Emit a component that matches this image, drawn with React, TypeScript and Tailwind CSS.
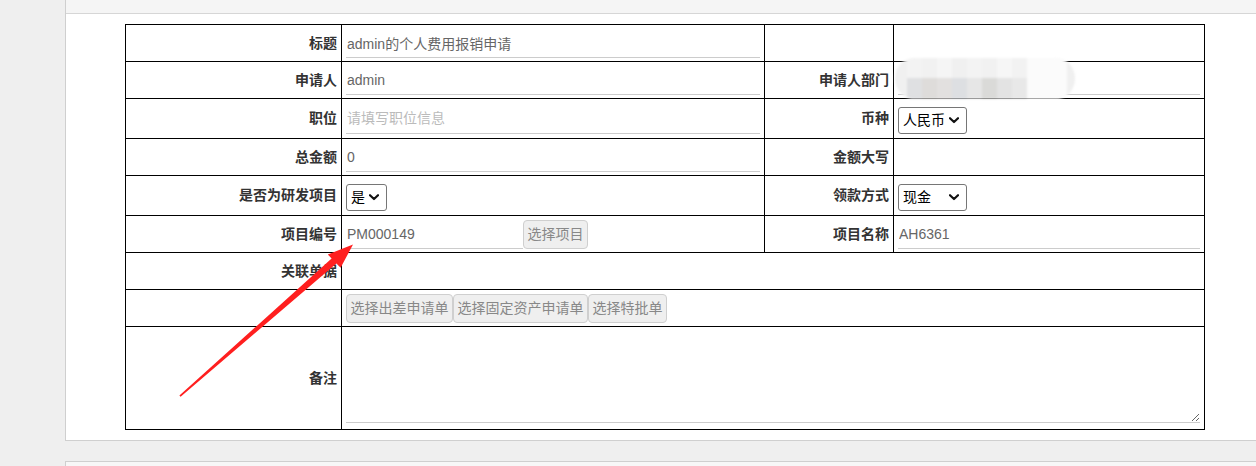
import React from "react";

const font = { fontFamily: '"Liberation Sans", "Noto Sans CJK SC", sans-serif' };

function Chevron() {
  return (
    <svg width="10" height="7" viewBox="0 0 10 7" className="shrink-0">
      <polyline points="1,1.2 5,5 9,1.2" fill="none" stroke="#111" strokeWidth="2.2" strokeLinecap="round" strokeLinejoin="round" />
    </svg>
  );
}

function Sel({ text, w }: { text: string; w: string }) {
  return (
    <div className={`inline-flex items-center justify-between h-[27px] border border-[#767676] rounded-[3px] pl-[4px] pr-[7px] text-[14px] text-black bg-white ${w}`}>
      <span>{text}</span>
      <Chevron />
    </div>
  );
}

function Inp({ value, placeholder, w = "w-full" }: { value?: string; placeholder?: string; w?: string }) {
  return (
    <input
      readOnly
      value={value ?? ""}
      placeholder={placeholder}
      className={`block h-[30px] ${w} border-0 border-b border-[#cccccc] outline-none text-[14px] text-[#666] placeholder:text-[#bbbbbb] px-[1px] bg-transparent`}
      style={font}
    />
  );
}

function Btn({ children }: { children: React.ReactNode }) {
  return (
    <button className="h-[29px] px-[3.5px] bg-[#efefef] border border-[#cfcfcf] rounded-[4px] text-[14px] text-[#888] whitespace-nowrap" style={font}>
      {children}
    </button>
  );
}

const L = "border border-black text-right align-middle pr-[4px] font-bold text-[14px] text-[#333]";
const V = "border border-black align-middle px-[4px]";

export default function App() {
  return (
    <div className="relative min-h-[466px] bg-[#efefef] overflow-hidden" style={font}>
      <div className="ml-[65px] border-l border-b border-[#cfcfcf] bg-white">
        <div className="h-[14px] bg-[#f5f5f5] border-b border-[#d6d6d6]" />
        <div className="pl-[59px] pt-[10px] pb-[10px]">
          <table className="table-fixed border-collapse w-[1079px]">
            <colgroup>
              <col className="w-[216px]" />
              <col className="w-[423px]" />
              <col className="w-[129px]" />
              <col className="w-[311px]" />
            </colgroup>
            <tbody>
              <tr className="h-[37px]">
                <td className={L}>标题</td>
                <td className={V}><Inp value="admin的个人费用报销申请" /></td>
                <td className={L}></td>
                <td className={V}></td>
              </tr>
              <tr className="h-[37px]">
                <td className={L}>申请人</td>
                <td className={V}><Inp value="admin" /></td>
                <td className={L}>申请人部门</td>
                <td className={V}><Inp value="" /></td>
              </tr>
              <tr className="h-[40px]">
                <td className={L}>职位</td>
                <td className={V}><Inp placeholder="请填写职位信息" /></td>
                <td className={L}>币种</td>
                <td className={V}><div className="pt-[3px]"><Sel text="人民币" w="w-[69px]" /></div></td>
              </tr>
              <tr className="h-[37px]">
                <td className={L}>总金额</td>
                <td className={V}><Inp value="0" /></td>
                <td className={L}>金额大写</td>
                <td className={V}></td>
              </tr>
              <tr className="h-[40px]">
                <td className={L}>是否为研发项目</td>
                <td className={V}><div className="pt-[3px]"><Sel text="是" w="w-[41px]" /></div></td>
                <td className={L}>领款方式</td>
                <td className={V}><div className="pt-[3px]"><Sel text="现金" w="w-[69px]" /></div></td>
              </tr>
              <tr className="h-[37px]">
                <td className={L}>项目编号</td>
                <td className={V}>
                  <div className="flex items-center">
                    <Inp value="PM000149" w="w-[177px]" />
                    <Btn>选择项目</Btn>
                  </div>
                </td>
                <td className={L}>项目名称</td>
                <td className={V}><Inp value="AH6361" /></td>
              </tr>
              <tr className="h-[37px]">
                <td className={L}>关联单据</td>
                <td className={V} colSpan={3}></td>
              </tr>
              <tr className="h-[37px]">
                <td className={L}></td>
                <td className={V} colSpan={3}>
                  <div className="flex">
                    <Btn>选择出差申请单</Btn>
                    <Btn>选择固定资产申请单</Btn>
                    <Btn>选择特批单</Btn>
                  </div>
                </td>
              </tr>
              <tr className="h-[103px]">
                <td className={L}>备注</td>
                <td className={V} colSpan={3}>
                  <textarea
                    readOnly
                    className="block w-full h-[90px] border-0 border-b border-[#cccccc] outline-none text-[14px] text-[#666] bg-transparent"
                    style={font}
                  />
                </td>
              </tr>
            </tbody>
          </table>
        </div>
      </div>
      <div className="mt-[20px] ml-[65px] h-[20px] border-l border-t border-[#cfcfcf] bg-[#f7f7f7]" />

      {/* blurred mosaic over department value */}
      <div className="absolute left-[895px] top-[58px] w-[180px] h-[41px] rounded-[20px] bg-[#f0f0f0] overflow-hidden blur-[1px]">
        <div className="flex h-[20px] pl-[12px]">
          <div className="w-[15px] bg-[#f3f3f3]" />
          <div className="w-[15px] bg-[#f1f1f1]" />
          <div className="w-[15px] bg-[#f5f5f5]" />
          <div className="w-[15px] bg-[#f0f0f0]" />
          <div className="w-[15px] bg-[#f3f3f3]" />
          <div className="w-[15px] bg-[#f1f1f1]" />
          <div className="w-[15px] bg-[#f6f6f6]" />
          <div className="w-[15px] bg-[#f2f2f2]" />
          <div className="w-[40px] bg-[#fbfbfb]" />
        </div>
        <div className="flex h-[21px] pl-[12px]">
          <div className="w-[15px] bg-[#dfe0e2]" />
          <div className="w-[15px] bg-[#dedcda]" />
          <div className="w-[15px] bg-[#e2e0df]" />
          <div className="w-[15px] bg-[#dddfe2]" />
          <div className="w-[15px] bg-[#e6e6e6]" />
          <div className="w-[15px] bg-[#dadad8]" />
          <div className="w-[15px] bg-[#e3e3e3]" />
          <div className="w-[15px] bg-[#e8e8e8]" />
          <div className="w-[40px] bg-[#fbfbfb]" />
        </div>
      </div>

      {/* red annotation arrow */}
      <svg className="absolute left-0 top-0 pointer-events-none" width="1256" height="466" viewBox="0 0 1256 466">
        <polygon
          points="179.4,395.5 331.6,258.6 327.8,254.4 353,244.5 340.6,267.8 336.4,263.4 180.6,396.7"
          fill="#ff1f1f"
        />
      </svg>
    </div>
  );
}
